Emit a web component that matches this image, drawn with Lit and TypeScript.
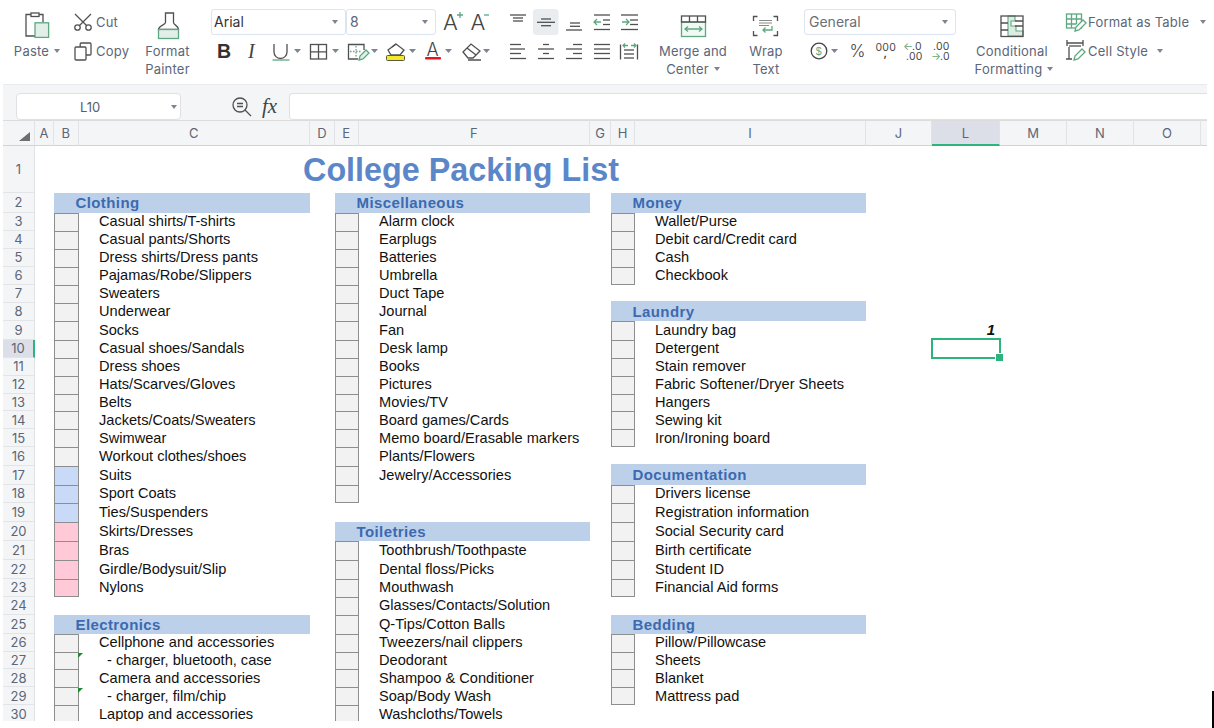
import { LitElement, html, css, svg } from "lit";
import { customElement } from "lit/decorators.js";

const ic = (x: number, y: number, w: number, h: number, c: unknown) =>
  html`<svg class="ic" width=${w} height=${h} viewBox="${x} ${y} ${w} ${h}">${c}</svg>`;
const caret = (x: number, y: number) => svg`<path class="cr" d="M${x} ${y}h7l-3.5 4z"/>`;
const lines = (rows: [number, number, number][]) =>
  rows.map(([a, b, y]) => svg`<path class="s" d="M${a} ${y}H${b}"/>`);

const COLS = [32, 19, 24.5, 231.5, 25, 23.5, 231.5, 21, 24, 231, 66, 68, 67, 67, 67, 6.5];
const ROWS = [47, 19.5, 18, 18, 18, 18, 18, 18.5, 18.5, 18, 18, 18, 17.5, 18, 18, 18.5, 19, 18.5, 18.5, 19, 19, 19, 18.5, 17.5, 19.5, 17.5, 17.5, 18, 18, 18];
const LETTERS = ["A", "B", "C", "D", "E", "F", "G", "H", "I", "J", "L", "M", "N", "O", ""];

const BLOCKS: { col: number; row: number; title: string; items: string[] }[] = [
  { col: 3, row: 2, title: "Clothing", items: ["Casual shirts/T-shirts", "Casual pants/Shorts", "Dress shirts/Dress pants", "Pajamas/Robe/Slippers", "Sweaters", "Underwear", "Socks", "Casual shoes/Sandals", "Dress shoes", "Hats/Scarves/Gloves", "Belts", "Jackets/Coats/Sweaters", "Swimwear", "Workout clothes/shoes", "Suits", "Sport Coats", "Ties/Suspenders", "Skirts/Dresses", "Bras", "Girdle/Bodysuit/Slip", "Nylons"] },
  { col: 3, row: 25, title: "Electronics", items: ["Cellphone and accessories", "  - charger, bluetooth, case", "Camera and accessories", "  - charger, film/chip", "Laptop and accessories"] },
  { col: 6, row: 2, title: "Miscellaneous", items: ["Alarm clock", "Earplugs", "Batteries", "Umbrella", "Duct Tape", "Journal", "Fan", "Desk lamp", "Books", "Pictures", "Movies/TV", "Board games/Cards", "Memo board/Erasable markers", "Plants/Flowers", "Jewelry/Accessories", ""] },
  { col: 6, row: 20, title: "Toiletries", items: ["Toothbrush/Toothpaste", "Dental floss/Picks", "Mouthwash", "Glasses/Contacts/Solution", "Q-Tips/Cotton Balls", "Tweezers/nail clippers", "Deodorant", "Shampoo & Conditioner", "Soap/Body Wash", "Washcloths/Towels"] },
  { col: 9, row: 2, title: "Money", items: ["Wallet/Purse", "Debit card/Credit card", "Cash", "Checkbook"] },
  { col: 9, row: 8, title: "Laundry", items: ["Laundry bag", "Detergent", "Stain remover", "Fabric Softener/Dryer Sheets", "Hangers", "Sewing kit", "Iron/Ironing board"] },
  { col: 9, row: 17, title: "Documentation", items: ["Drivers license", "Registration information", "Social Security card", "Birth certificate", "Student ID", "Financial Aid forms"] },
  { col: 9, row: 25, title: "Bedding", items: ["Pillow/Pillowcase", "Sheets", "Blanket", "Mattress pad"] },
];

@customElement("app-root")
export class AppRoot extends LitElement {
  static styles = css`
    :host { display: block; position: relative; width: 1214px; height: 728px; overflow: hidden; background: #fff; font-family: Inter, "Liberation Sans", sans-serif; }
    .ic { display: block; flex: none; overflow: visible; }
    .s { fill: none; stroke: #505050; stroke-width: 1.3; }
    .d { fill: none; stroke: #444; stroke-width: 1.3; }
    .w { fill: #fff; stroke: #505050; stroke-width: 1.3; }
    .g { fill: none; stroke: #5ea881; stroke-width: 1.3; }
    .gf { fill: #e2efe8; stroke: #5ea881; stroke-width: 1.3; }
    .cr { fill: #7d8592; }
    .tx { fill: #444; font-family: "Liberation Sans", sans-serif; }
    .tl { fill: #444; font-family: Inter, sans-serif; font-weight: 300; }
    .txb { font-weight: 700; fill: #333; }
    .txi { font-family: "Liberation Serif", serif; font-style: italic; }
    .tn { font-size: 10.5px; font-family: Inter, sans-serif; fill: #4a4a4a; }
    .tg { fill: #5ea881; }

    .ribbon { display: flex; height: 84px; padding-top: 9px; box-sizing: border-box; color: #5c6678; font-size: 13px; letter-spacing: .22px; }
    .grp { display: flex; flex-direction: column; align-items: center; flex: none; line-height: 18px; margin-top: 3px; text-align: center; }
    .paste { width: 74px; }
    .cc { width: 66px; display: grid; grid-template-rows: 26px 26px; row-gap: 3px; }
    .painter { width: 71px; padding-right: 16px; box-sizing: border-box; }
    .two { flex: none; display: flex; flex-direction: column; gap: 3px; }
    .row { display: flex; height: 26px; align-items: center; line-height: 26px; white-space: nowrap; }
    .fontg { width: 287px; }
    .alig { width: 152px; }
    .merge { width: 86px; }
    .wrap { width: 60px; }
    .numg { width: 168px; padding-left: 8px; box-sizing: border-box; }
    .cond { width: 96px; }
    .sty { width: 147px; padding-left: 2px; box-sizing: border-box; }
    .lbl-c { display: inline-flex; align-items: center; gap: 5px; }
    .lbl-c.nudge { padding-left: 4px; }
    .sel { box-sizing: border-box; height: 26px; border: 1px solid #dbe4f1; border-radius: 3px; display: flex; align-items: center; justify-content: space-between; padding: 0 7px 0 2px; font-size: 14px; letter-spacing: 0; }
    .sel.f { width: 135px; color: #333; }
    .sel.n { width: 90px; margin-right: 4px; padding-left: 3px; color: #5c6678; }
    .sel.g2 { width: 152px; color: #6a6f78; padding-left: 4px; }
    .tri { width: 0; height: 0; flex: none; border-left: 3.5px solid transparent; border-right: 3.5px solid transparent; border-top: 4px solid #7d8592; }
    .tri.t1 { margin-left: 11px; }
    .tri.t2 { margin-left: 9px; }

    .formula { margin-left: 3px; width: 1204px; height: 36px; box-sizing: border-box; background: #f4f5f7; border-top: 1px solid #e9ebee; padding: 8px 0 0 13px; display: flex; align-items: flex-start; }
    .name { box-sizing: border-box; width: 165px; height: 27px; background: #fff; border: 1px solid #dfe0e3; border-radius: 4px; display: flex; align-items: center; justify-content: space-between; font-size: 13px; color: #555e70; padding: 0 3px 0 63px; }
    .fx { width: 108px; flex: none; }
    .input { flex: 1; height: 27px; box-sizing: border-box; background: #fff; border: 1px solid #dfe0e3; border-right: 0; border-radius: 4px 0 0 4px; }

    .sheet { margin-left: 3px; width: 1204px; height: 601px; overflow: hidden; display: grid; background: #fff; }
    .ch, .rh { background: #f4f5f7; color: #5c6678; font-size: 13px; display: flex; align-items: center; justify-content: center; box-sizing: border-box; }
    .ch { border-top: 1px solid #dcdcdc; border-bottom: 1.5px solid #d0d2d5; border-right: 1px solid #e0e2e6; }
    .ch.on { background: #dcdfe7; border-bottom: 2px solid #2db37c; }
    .ch.end { border-right: 0; }
    .rh { grid-column: 1; border-bottom: 1px solid #e2e4e8; border-right: 1px solid #e0e2e6; }
    .rh.on { background: #dcdfe7; border-right: 2px solid #2db37c; }
    .title { font: 700 32.3px "Liberation Sans", Arial, sans-serif; color: #5b87c9; display: flex; align-items: center; justify-content: center; white-space: nowrap; padding: 2px 0 0 2px; box-sizing: border-box; }
    .bar { background: #bdd0ea; color: #3b6ab0; font: 700 15px/1 "Liberation Sans", Arial, sans-serif; letter-spacing: .4px; padding-left: 21.5px; display: flex; align-items: center; box-sizing: border-box; }
    .bar.up { margin-top: -1.5px; }
    .box { position: relative; box-sizing: border-box; background: #f2f2f2; border: 1.5px solid #8e8e8e; border-bottom: 0; }
    .box.last { border-bottom: 1.5px solid #8e8e8e; }
    .box.blue { background: #c9daf8; }
    .box.pink { background: #ffc9d8; }
    .box.mark::after { content: ""; position: absolute; left: 100%; top: 0; width: 0; height: 0; border-top: 5px solid #1c8a2e; border-right: 5px solid transparent; }
    .item { font: 14.6px "Liberation Sans", Arial, sans-serif; color: #111; padding: 0 0 1px 20.5px; display: flex; align-items: center; white-space: pre; box-sizing: border-box; min-width: 0; }
    .item.ind { padding-left: 28.5px; }
    .item.tight { padding-left: 20px; }
    .one { font: italic 700 15px "Liberation Sans", Arial, sans-serif; color: #111; display: flex; align-items: flex-end; justify-content: flex-end; padding: 0 5px 3px 0; line-height: 1; }
    .cur { position: relative; box-sizing: border-box; margin: -1.5px -1px -1.5px -1px; border: 2px solid #2db37c; }
    .handle { position: absolute; right: -5px; bottom: -5px; width: 7px; height: 7px; background: #2db37c; border: 1px solid #fff; }
    .edge { position: absolute; left: 1212px; top: 691px; width: 1.5px; height: 37px; background: #000; }
  `;

  private renderRibbon() {
    const miniTri = html`<span class="tri"></span>`;
    return html`<div class="ribbon">
      <div class="grp paste">
        ${ic(24, 12, 28, 30, svg`
          <path class="s" d="M32 14.5h-5V36h9M40 14.5h4v8"/>
          <rect class="s" x="32" y="13" width="8" height="3.5"/>
          <rect class="gf" x="36" y="22.8" width="13.6" height="14.6"/>`)}
        <span class="lbl-c">Paste ${miniTri}</span>
      </div>
      <div class="cc">
        <div class="row">${ic(74, 9, 22, 26, svg`
          <circle class="s" cx="77.5" cy="27.5" r="2.7"/><circle class="s" cx="88.5" cy="27.5" r="2.7"/>
          <path class="s" d="M75 14l11.5 11.5M91 14L79.5 25.5"/>`)}<span>Cut</span></div>
        <div class="row">${ic(74, 38, 22, 26, svg`
          <rect class="s" x="80.2" y="43" width="10.8" height="12" rx="1"/>
          <rect class="w" x="75" y="47" width="11" height="13" rx="1"/>`)}<span>Copy</span></div>
      </div>
      <div class="grp painter">
        ${ic(154, 12, 27, 30, svg`
          <path class="s" d="M165.500 13h8v9.500c0 2.500 5 3 5 7H158.500c0-4 7-4.500 7-7z"/>
          <rect class="gf" x="158.500" y="29.500" width="20" height="9"/>`)}
        <span>Format</span><span>Painter</span>
      </div>

      <div class="two fontg">
        <div class="row">
          <div class="sel f"><span>Arial</span>${miniTri}</div>
          <div class="sel n"><span>8</span>${miniTri}</div>
          ${ic(441, 9, 30, 26, svg`
            <text class="tl" x="444" y="30" font-size="22">A</text>
            <path class="g" d="M458 15h6M461 12v6"/>`)}
          ${ic(471, 9, 27, 26, svg`
            <text class="tl" x="471.500" y="30" font-size="22">A</text>
            <path class="g" d="M485 15h5"/>`)}
        </div>
        <div class="row">
          ${ic(211, 38, 29, 26, svg`<text class="tx txb" x="217" y="58" font-size="19.500">B</text>`)}
          ${ic(240, 38, 28, 26, svg`<text class="tx txi" x="248" y="58" font-size="20">I</text>`)}
          ${ic(268, 38, 35, 26, svg`
            <path class="s" d="M274 44v8a6.500 6.500 0 0 0 13 0v-8"/>
            <path class="g" d="M272.500 60h17"/>${caret(294, 49)}`)}
          ${ic(303, 38, 38, 26, svg`
            <rect class="s" x="310.500" y="44.500" width="16" height="14.500"/>
            <path class="s" d="M318.500 44.500V59M310.500 51.800h16"/>${caret(332, 49)}`)}
          ${ic(341, 38, 38, 26, svg`
            <path class="s" d="M364 50v-5.500H348.500V59H358"/>
            <path class="g" stroke-dasharray="1.500 1.500" d="M356 46v11M350 51.500h11"/>
            <path class="gf" d="M359 60l1-4 6-6 3 3-6 6z"/>${caret(371, 49)}`)}
          ${ic(379, 38, 39, 26, svg`
            <path class="s" d="M388 50l8-6 8 6-4 5h-9z"/>
            <path class="s" d="M392 47l4-3"/>
            <rect x="386.500" y="55.500" width="18" height="5" rx="1" fill="#f3e829" stroke="#5a5a3a" stroke-width="1"/>${caret(409, 49)}`)}
          ${ic(418, 38, 36, 26, svg`
            <text class="tl" x="426.500" y="56" font-size="18">A</text>
            <rect x="425" y="57" width="16" height="2.500" rx="1" fill="#e8141e"/>${caret(445, 49)}`)}
          ${ic(454, 38, 44, 26, svg`
            <path class="s" d="M463 52l8-8 9 7-7 7h-5z"/>
            <path class="s" d="M467 48l9 7M468 60h13"/>${caret(483, 49)}`)}
        </div>
      </div>

      <div class="two alig">
        <div class="row">
          ${ic(498, 9, 152, 26, svg`
            <rect x="533" y="9" width="25.500" height="26" rx="3.500" fill="#e9edf0"/>
            ${lines([[510, 526, 15], [513, 523, 18], [513, 523, 21], [537, 555, 22.3], [541, 551, 19], [541, 551, 25.7], [570, 580, 23], [570, 580, 26.3], [566, 582, 30], [594, 610, 15], [603, 610, 20], [603, 610, 24.5], [594, 610, 29.5], [621, 638, 15], [630, 638, 20], [630, 638, 24.5], [621, 638, 29.5]])}
            <path class="g" d="M601 22h-7M597 19l-3 3 3 3M622 22h7M626 19l3 3-3 3"/>`)}
        </div>
        <div class="row">
          ${ic(498, 38, 152, 26, svg`
            ${lines([[510, 521, 44.5], [510, 525, 49], [510, 521, 53.5], [510, 526, 58.5], [543, 549, 44.5], [538, 554, 49], [543, 549, 53.5], [538, 554, 58.5], [573, 582, 44.5], [566, 582, 49], [573, 582, 53.5], [566, 582, 58.5], [594, 610, 44.5], [594, 610, 49], [594, 610, 53.5], [594, 610, 58.5], [624, 634, 50], [624, 634, 54], [624, 634, 58]])}
            <path class="s" d="M620.500 44.500V59.500M637.500 44.500V59.500"/>
            <path class="g" d="M623 45.500h5M625 43.500l-2 2 2 2M636 45.500h-5M634 43.500l2 2-2 2"/>`)}
        </div>
      </div>

      <div class="grp merge">
        ${ic(680, 12, 31, 30, svg`
          <rect class="gf" x="683.500" y="22" width="24" height="14.500" style="fill:#f2f8f4"/>
          <rect class="s" x="683.500" y="16" width="24" height="6"/>
          <path class="s" d="M691.500 16v6M699.500 16v6"/>
          <path class="g" d="M687 29h17M690 26.500L687 29l3 2.500M701 26.500l3 2.500-3 2.500"/>`)}
        <span>Merge and</span>
        <span class="lbl-c">Center ${miniTri}</span>
      </div>
      <div class="grp wrap">
        ${ic(751, 12, 30, 30, svg`
          <path class="s" d="M753.500 21v-4.500h4M773.500 16.500h4V21M753.500 31v4.500h4M773.500 35.500h4V31"/>
          <path d="M759 20.500h13M759 23h13M759 25.500h10" fill="none" stroke="#8a8a8a" stroke-width="1"/>
          <path class="g" d="M772 26v4h-9M765.500 27.500L763 30l2.500 2.500"/>`)}
        <span>Wrap</span><span>Text</span>
      </div>

      <div class="two numg">
        <div class="row"><div class="sel g2"><span>General</span>${miniTri}</div></div>
        <div class="row">
          ${ic(804, 38, 42, 26, svg`
            <circle class="d" cx="819" cy="51" r="7.800"/>
            <text class="tx tg" x="815.800" y="55" font-size="10.500">$</text>${caret(831, 49)}`)}
          ${ic(846, 38, 24, 26, svg`<text class="tl" x="849.500" y="57" font-size="17">%</text>`)}
          ${ic(870, 38, 30, 26, svg`
            <text class="tn" x="875.500" y="51"><tspan>000</tspan><tspan x="883.500" y="57" font-weight="700">,</tspan></text>`)}
          ${ic(900, 38, 28, 26, svg`
            <text class="tn"><tspan class="tg" x="903" y="50">←</tspan><tspan x="912" y="50">.0</tspan><tspan x="906" y="60">.00</tspan></text>`)}
          ${ic(928, 38, 28, 26, svg`
            <text class="tn"><tspan x="933" y="50">.00</tspan><tspan class="tg" x="931" y="60">→</tspan><tspan x="940" y="60">.0</tspan></text>`)}
        </div>
      </div>

      <div class="grp cond">
        ${ic(999, 12, 28, 30, svg`
          <rect x="1002" y="16" width="22" height="20" fill="#fff"/>
          <path d="M1009 16h7v5h-4v5h5v5h7v5H1009z" fill="#dcece3" stroke="#5ea881" stroke-width="1.100"/>
          <rect class="s" x="1002" y="16" width="22" height="20.500"/>
          <path class="s" d="M1002 23h7M1002 30h7M1016 21h8M1016 26h8"/>`)}
        <span>Conditional</span>
        <span class="lbl-c nudge">Formatting ${miniTri}</span>
      </div>

      <div class="two sty">
        <div class="row">
          ${ic(1062, 9, 26, 26, svg`
            <rect class="g" x="1066.500" y="14" width="15" height="14"/>
            <path class="g" d="M1066.500 19h15M1066.500 24h10M1071.500 14v14M1076.500 14v10"/>
            <path class="w" style="stroke:#5ea881" d="M1075 31l1-4 7-7 3 3-7 7z"/>`)}
          <span>Format as Table</span><span class="tri t1"></span>
        </div>
        <div class="row">
          ${ic(1062, 38, 26, 26, svg`
            <path class="s" d="M1067 43h16M1069 47v10M1067 46v-6M1083 46v-6M1066 59h6M1069 59v-3"/>
            <path class="s" d="M1069 46h12"/>
            <path class="w" style="stroke:#5ea881" d="M1074 60l1-4 7-7 3 3-7 7z"/>`)}
          <span>Cell Style</span><span class="tri t2"></span>
        </div>
      </div>
    </div>`;
  }

  private renderBlock(b: { col: number; row: number; title: string; items: string[] }) {
    const up = b.col === 9 && (b.row === 8 || b.row === 17) ? "up" : "";
    return html`
      <div class="bar ${up}" style="grid-row:${b.row + 1};grid-column:${b.col} / span 2">${b.title}</div>
      ${b.items.map((t, i) => {
        const r = b.row + 1 + i;
        const tone = b.col === 3 && r >= 20 && r <= 23 ? "pink" : b.col === 3 && r >= 17 && r <= 19 ? "blue" : "";
        const mark = b.col === 3 && (r === 27 || r === 29) ? "mark" : "";
        const last = i === b.items.length - 1 ? "last" : "";
        const cls = t.startsWith("  ") ? "ind" : b.col === 9 ? "tight" : "";
        return html`
          <div class="box ${tone} ${mark} ${last}" style="grid-row:${r + 1};grid-column:${b.col}"></div>
          <div class="item ${cls}" style="grid-row:${r + 1};grid-column:${b.col + 1}">${t.trim()}</div>`;
      })}`;
  }

  render() {
    const template = `grid-template-columns:${COLS.map((c) => c + "px").join(" ")};grid-template-rows:26px ${ROWS.map((r) => r + "px").join(" ")}`;
    return html`
      ${this.renderRibbon()}
      <div class="formula">
        <div class="name"><span>L10</span><span class="tri"></span></div>
        <div class="fx">
          ${ic(181, 93, 108, 27, svg`
            <circle class="s" cx="240" cy="105" r="7"/>
            <path class="s" d="M245 110l6 6M237 103.500h6M237 106.500h6"/>
            <text class="tx txi" x="262" y="113" font-size="21">fx</text>`)}
        </div>
        <div class="input"></div>
      </div>
      <div class="sheet" style=${template}>
        <div class="ch" style="grid-row:1;grid-column:1">${ic(3, 120, 32, 26, svg`<path d="M30 132v9H19z" fill="#6e6e6e"/>`)}</div>
        ${LETTERS.map((l, i) => html`<div class="ch ${l === "L" ? "on" : ""} ${l === "" ? "end" : ""}" style="grid-row:1;grid-column:${i + 2}">${l}</div>`)}
        ${ROWS.map((_, i) => html`<div class="rh ${i === 9 ? "on" : ""}" style="grid-row:${i + 2}">${i + 1}</div>`)}
        <div class="title" style="grid-row:2;grid-column:3 / span 8">College Packing List</div>
        ${BLOCKS.map((b) => this.renderBlock(b))}
        <div class="one" style="grid-row:10;grid-column:12">1</div>
        <div class="cur" style="grid-row:11;grid-column:12"><div class="handle"></div></div>
      </div>
      <div class="edge"></div>
    `;
  }
}
